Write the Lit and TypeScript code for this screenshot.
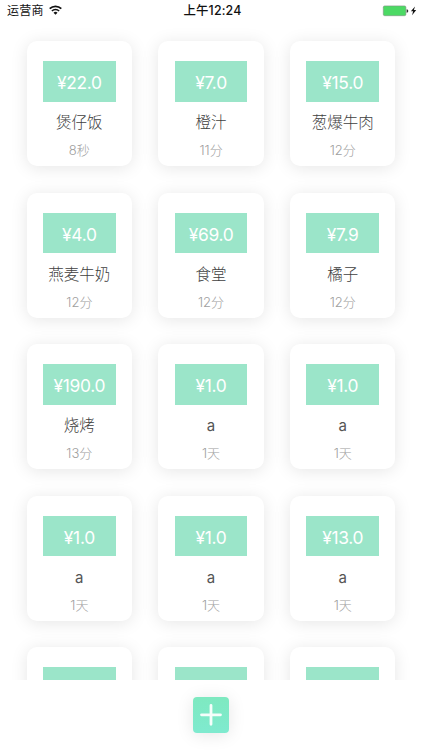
import { LitElement, html, css } from "lit";
import { customElement, property } from "lit/decorators.js";

interface Expense {
  price: string;
  name: string;
  time: string;
}

const expenses: (Expense | null)[] = [
  { price: "22.0", name: "煲仔饭", time: "8秒" },
  { price: "7.0", name: "橙汁", time: "11分" },
  { price: "15.0", name: "葱爆牛肉", time: "12分" },
  { price: "4.0", name: "燕麦牛奶", time: "12分" },
  { price: "69.0", name: "食堂", time: "12分" },
  { price: "7.9", name: "橘子", time: "12分" },
  { price: "190.0", name: "烧烤", time: "13分" },
  { price: "1.0", name: "a", time: "1天" },
  { price: "1.0", name: "a", time: "1天" },
  { price: "1.0", name: "a", time: "1天" },
  { price: "1.0", name: "a", time: "1天" },
  { price: "13.0", name: "a", time: "1天" },
  null,
  null,
  null,
];

@customElement("status-bar")
export class StatusBar extends LitElement {
  static styles = css`
    :host {
      display: grid;
      grid-template-columns: 1fr auto 1fr;
      align-items: center;
      height: 22px;
      padding: 0 5px 0 7px;
      box-sizing: border-box;
      font-size: 12px;
      line-height: 22px;
      color: #111;
    }
    .carrier,
    .power {
      display: flex;
      align-items: center;
    }
    .carrier {
      gap: 5px;
      letter-spacing: 0.2px;
    }
    .time {
      padding-left: 1px;
      font-weight: 500;
      font-size: 12.4px;
      letter-spacing: 0.15px;
    }
    .power {
      justify-content: flex-end;
    }
    svg {
      display: block;
    }
    .carrier svg {
      margin-bottom: 2px;
    }
  `;
  render() {
    return html`
      <div class="carrier">
        <span>运营商</span>
        <svg width="13" height="10" viewBox="0 0 13 10" fill="none" stroke="#111" stroke-width="1.7">
          <path d="M0.7 3.7a8.2 8.2 0 0 1 11.6 0M2.9 6a5.1 5.1 0 0 1 7.2 0" />
          <path d="M6.5 9.7L4.5 7.7a2.8 2.8 0 0 1 4 0z" fill="#111" stroke="none" />
        </svg>
      </div>
      <span class="time">上午12:24</span>
      <div class="power">
        <svg width="35" height="12" viewBox="0 0 35 12">
          <rect x="1.3" y="0.9" width="22.6" height="9.8" rx="1.4" fill="#4cd964" stroke="#7f9283" stroke-width="0.6" />
          <path d="M24.6 4.2q1.7 0.3 1.7 1.8t-1.7 1.8z" fill="#333" />
          <path d="M33 1.4L28.9 6.2h2.2l-1 4 4.1-5.1h-2.3z" fill="#111" />
        </svg>
      </div>
    `;
  }
}

@customElement("expense-card")
export class ExpenseCard extends LitElement {
  @property({ attribute: false }) item: Expense | null = null;
  static styles = css`
    :host {
      display: flex;
      flex-direction: column;
      align-items: center;
      box-sizing: border-box;
      height: 125.2px;
      padding-top: 20px;
      border-radius: 10px;
      background: #fff;
      box-shadow: 0 2px 17px rgba(0, 0, 0, 0.1);
    }
    .price {
      width: 72.8px;
      height: 40.6px;
      line-height: 43.4px;
      text-align: center;
      background: #9be5c9;
      color: #fff;
      font-size: 17.4px;
      letter-spacing: -0.3px;
    }
    .name {
      margin-top: 9.4px;
      line-height: 24px;
      font-size: 15.5px;
      font-weight: 300;
      color: #404040;
    }
    .name.latin {
      font-size: 15px;
      font-weight: 400;
      color: #555;
    }
    .time {
      margin-top: 5px;
      line-height: 20px;
      font-size: 13px;
      font-weight: 300;
      color: #a0a0a0;
    }
  `;
  render() {
    const item = this.item;
    if (!item) return html`<div class="price"></div>`;
    const latin = /^[a-z]+$/i.test(item.name) ? "latin" : "";
    return html`
      <div class="price">¥${item.price}</div>
      <div class="name ${latin}">${item.name}</div>
      <div class="time">${item.time}</div>
    `;
  }
}

@customElement("app-root")
export class AppRoot extends LitElement {
  static styles = css`
    :host {
      display: flex;
      flex-direction: column;
      height: 100vh;
      overflow: hidden;
      background: #fff;
      font-family: Inter, "Noto Sans CJK SC", sans-serif;
    }
    .list {
      flex: 1;
      min-height: 0;
      overflow: hidden;
      box-sizing: border-box;
      padding: 19px 26.7px 0;
      display: grid;
      grid-template-columns: repeat(3, 105.3px);
      column-gap: 26.4px;
      row-gap: 26.4px;
      align-content: start;
    }
    .footer {
      flex: none;
      height: 70px;
      box-sizing: border-box;
      padding-top: 17px;
      display: flex;
      justify-content: center;
      align-items: flex-start;
    }
    .add {
      width: 36px;
      height: 36px;
      padding: 0;
      border: 0;
      border-radius: 4px;
      background: linear-gradient(#7ee9c0, #7feacf);
      box-shadow: 0 2px 17px rgba(0, 0, 0, 0.1);
    }
    .add svg {
      display: block;
    }
  `;
  render() {
    return html`
      <status-bar></status-bar>
      <div class="list">
        ${expenses.map((e) => html`<expense-card .item=${e}></expense-card>`)}
      </div>
      <div class="footer">
        <button class="add" aria-label="添加">
          <svg width="36" height="36" viewBox="0 0 36 36" stroke="#fff" stroke-opacity="0.92" stroke-width="2.8" stroke-linecap="round" fill="none">
            <path d="M18 8.3v19M8.5 17.8h19" />
          </svg>
        </button>
      </div>
    `;
  }
}
